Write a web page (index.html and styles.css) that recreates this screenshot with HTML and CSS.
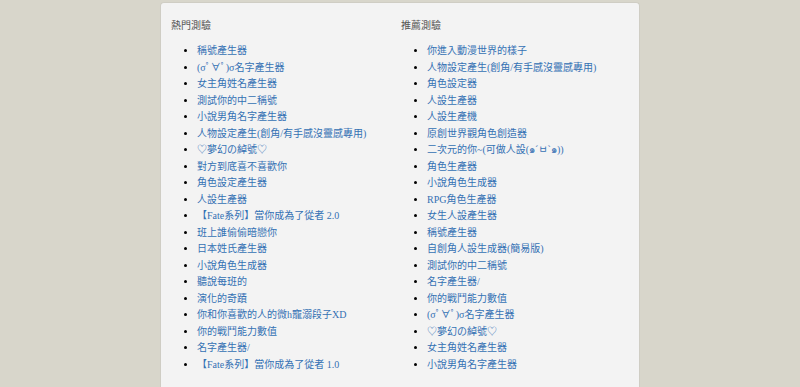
FILE: index.html
```html
<!DOCTYPE html>
<html lang="zh-Hant">
<head>
    <meta charset="UTF-8">
    <meta name="viewport" content="width=device-width, initial-scale=1.0">
    <title>測驗列表</title>
    <link rel="stylesheet" href="styles.css">
</head>
<body>
    <div id="main-box">
        <div class="quiz-col">
            <div class="col-title">熱門測驗</div>
            <ul class="quiz-list">
                <li><a href="#">稱號產生器</a></li>
                <li><a href="#">(σﾟ∀ﾟ)σ名字產生器</a></li>
                <li><a href="#">女主角姓名產生器</a></li>
                <li><a href="#">測試你的中二稱號</a></li>
                <li><a href="#">小說男角名字產生器</a></li>
                <li><a href="#">人物設定產生(創角/有手感沒靈感專用)</a></li>
                <li><a href="#">♡夢幻の綽號♡</a></li>
                <li><a href="#">對方到底喜不喜歡你</a></li>
                <li><a href="#">角色設定產生器</a></li>
                <li><a href="#">人設生產器</a></li>
                <li><a href="#">【Fate系列】當你成為了從者 2.0</a></li>
                <li><a href="#">班上誰偷偷暗戀你</a></li>
                <li><a href="#">日本姓氏產生器</a></li>
                <li><a href="#">小說角色生成器</a></li>
                <li><a href="#">聽說每班的</a></li>
                <li><a href="#">演化的奇蹟</a></li>
                <li><a href="#">你和你喜歡的人的微h寵溺段子XD</a></li>
                <li><a href="#">你的戰鬥能力數值</a></li>
                <li><a href="#">名字產生器/</a></li>
                <li><a href="#">【Fate系列】當你成為了從者 1.0</a></li>
            </ul>
        </div>
        <div class="quiz-col">
            <div class="col-title">推薦測驗</div>
            <ul class="quiz-list">
                <li><a href="#">你進入動漫世界的樣子</a></li>
                <li><a href="#">人物設定產生(創角/有手感沒靈感專用)</a></li>
                <li><a href="#">角色設定器</a></li>
                <li><a href="#">人設生產器</a></li>
                <li><a href="#">人設生產機</a></li>
                <li><a href="#">原創世界觀角色創造器</a></li>
                <li><a href="#">二次元的你~(可做人設(๑´ㅂ`๑))</a></li>
                <li><a href="#">角色生產器</a></li>
                <li><a href="#">小說角色生成器</a></li>
                <li><a href="#">RPG角色生產器</a></li>
                <li><a href="#">女生人設產生器</a></li>
                <li><a href="#">稱號產生器</a></li>
                <li><a href="#">自創角人設生成器(簡易版)</a></li>
                <li><a href="#">測試你的中二稱號</a></li>
                <li><a href="#">名字產生器/</a></li>
                <li><a href="#">你的戰鬥能力數值</a></li>
                <li><a href="#">(σﾟ∀ﾟ)σ名字產生器</a></li>
                <li><a href="#">♡夢幻の綽號♡</a></li>
                <li><a href="#">女主角姓名產生器</a></li>
                <li><a href="#">小說男角名字產生器</a></li>
            </ul>
        </div>
    </div>
</body>
</html>
```

FILE: styles.css
```css
body {
    margin: 0;
    background-color: #d8d6cb; /* fondo gris */
    font-family: "Liberation Serif", "Noto Sans CJK TC", serif;
    font-size: 10px;
}
#main-box {
    width: 458px;
    margin: 2px auto 0;
    padding: 15px 10px 30px;
    background-color: #f3f3f3;
    border: 1px solid #cfcdc4;
    border-bottom: none;
    border-radius: 4px 4px 0 0;
    display: grid;
    grid-template-columns: 230px 228px;
}
.col-title {
    color: #555;
    line-height: 16.5px;
    margin-bottom: 8.5px;
}
.quiz-list {
    margin: 0;
    padding-left: 26px;
    line-height: 16.5px;
}
.quiz-list a {
    color: #3471b4;
    text-decoration: none;
}
```
